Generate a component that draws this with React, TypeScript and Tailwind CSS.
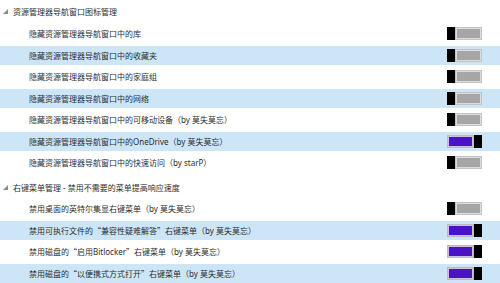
import React from "react";

type Item = { label: string; on: boolean };
type Group = { title: string; items: Item[] };

const groups: Group[] = [
  {
    title: "资源管理器导航窗口图标管理",
    items: [
      { label: "隐藏资源管理器导航窗口中的库", on: false },
      { label: "隐藏资源管理器导航窗口中的收藏夹", on: false },
      { label: "隐藏资源管理器导航窗口中的家庭组", on: false },
      { label: "隐藏资源管理器导航窗口中的网络", on: false },
      { label: "隐藏资源管理器导航窗口中的可移动设备（by 莫失莫忘）", on: false },
      { label: "隐藏资源管理器导航窗口中的OneDrive（by 莫失莫忘）", on: true },
      { label: "隐藏资源管理器导航窗口中的快速访问（by starP）", on: false },
    ],
  },
  {
    title: "右键菜单管理 - 禁用不需要的菜单提高响应速度",
    items: [
      { label: "禁用桌面的英特尔集显右键菜单（by 莫失莫忘）", on: false },
      { label: "禁用可执行文件的“兼容性疑难解答”右键菜单（by 莫失莫忘）", on: true },
      { label: "禁用磁盘的“启用Bitlocker”右键菜单（by 莫失莫忘）", on: true },
      { label: "禁用磁盘的“以便携式方式打开”右键菜单（by 莫失莫忘）", on: true },
    ],
  },
];

// quotes are drawn full width, as the CJK font does
function Label({ text }: { text: string }) {
  const parts = text.split(/([“”])/);
  return (
    <span className="flex-1 whitespace-nowrap">
      {parts.map((part, i) =>
        part === "“" || part === "”" ? (
          <span key={i} style={{ fontFamily: '"Noto Sans CJK SC", sans-serif' }}>
            {part}
          </span>
        ) : (
          <React.Fragment key={i}>{part}</React.Fragment>
        ),
      )}
    </span>
  );
}

function Toggle({ on }: { on: boolean }) {
  const thumb = <div className="h-full w-[8px] bg-black" />;
  return (
    <div className="flex h-[13px] w-[35px]">
      {on ? null : thumb}
      <div className={on ? "flex-1 border border-[#bcbcbc] bg-[#c9c2d8] p-px" : "flex-1 border border-[#c4c4c4] bg-[#dcdcdc] p-px"}>
        <div className={on ? "h-full w-full bg-[#4a14c4]" : "h-full w-full bg-[#a6a6a6]"} />
      </div>
      {on ? thumb : null}
    </div>
  );
}

export default function App() {
  return (
    <div
      className="h-[283px] w-[500px] overflow-hidden bg-white text-[8px] leading-[11px] text-[#2e2e2e]"
      style={{ fontFamily: '"Noto Sans", "Noto Sans CJK SC", sans-serif' }}
    >
      {groups.map((group, gi) => (
        <section key={group.title}>
          <div className={gi === 0 ? "flex h-[23px] items-center pl-[3px]" : "flex h-[24.5px] items-center pl-[3px] pt-[4px]"}>
            <svg width="5" height="5" viewBox="0 0 5 5" className="mr-[5px]" aria-hidden="true">
              <polygon points="5,0 5,5 0,5" fill="#8a8a8a" />
            </svg>
            <span>{group.title}</span>
          </div>
          {group.items.map((item, i) => (
            <div key={item.label} className="flex h-[21.5px] items-center">
              <div className={`flex h-[19px] w-full items-center pl-[29px] ${i % 2 === 1 ? "bg-[#cce5f7]" : ""}`}>
                <Label text={item.label} />
                <div className="mr-[18px]">
                  <Toggle on={item.on} />
                </div>
              </div>
            </div>
          ))}
        </section>
      ))}
    </div>
  );
}
